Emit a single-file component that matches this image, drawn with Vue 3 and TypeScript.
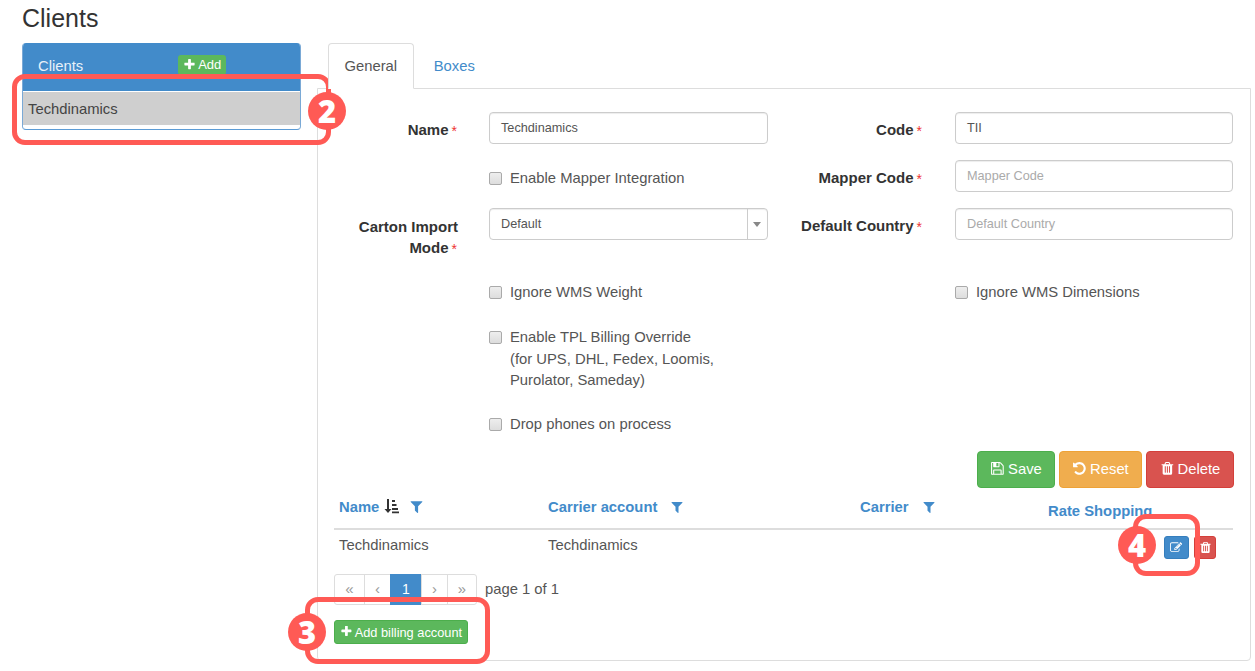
<script setup lang="ts">
const trash = 'M704 1376v-704q0-14-9-23t-23-9h-64q-14 0-23 9t-9 23v704q0 14 9 23t23 9h64q14 0 23-9t9-23zm256 0v-704q0-14-9-23t-23-9h-64q-14 0-23 9t-9 23v704q0 14 9 23t23 9h64q14 0 23-9t9-23zm256 0v-704q0-14-9-23t-23-9h-64q-14 0-23 9t-9 23v704q0 14 9 23t23 9h64q14 0 23-9t9-23zm-544-992h448l-48-117q-7-9-17-11h-317q-10 2-17 11zm928 32v64q0 14-9 23t-23 9h-96v948q0 83-47 143.500t-113 60.500h-832q-66 0-113-58.500t-47-141.500v-952h-96q-14 0-23-9t-9-23v-64q0-14 9-23t23-9h309l70-167q15-37 54-63t79-26h320q40 0 79 26t54 63l70 167h309q14 0 23 9t9 23z'
const plus = 'M1600 736v192q0 40-28 68t-68 28h-416v416q0 40-28 68t-68 28h-192q-40 0-68-28t-28-68v-416h-416q-40 0-68-28t-28-68v-192q0-40 28-68t68-28h416v-416q0-40 28-68t68-28h192q40 0 68 28t28 68v416h416q40 0 68 28t28 68z'
const filter = 'M1595 295q17 41-14 70l-493 493v742q0 42-39 59-13 5-25 5-27 0-45-19l-256-256q-19-19-19-45v-486l-493-493q-31-29-14-70 17-39 59-39h1280q42 0 59 39z'
const save = 'M512 1536h768v-384h-768v384zm896 0h128v-896q0-14-10-38.500t-20-34.500l-281-281q-10-10-34-20t-39-10v416q0 40-28 68t-68 28h-576q-40 0-68-28t-28-68v-416h-128v1280h128v-416q0-40 28-68t68-28h832q40 0 68 28t28 68v416zm-384-928v-320q0-13-9.500-22.500t-22.500-9.500h-192q-13 0-22.500 9.500t-9.500 22.500v320q0 13 9.500 22.500t22.500 9.500h192q13 0 22.500-9.500t9.500-22.500zm640 32v928q0 40-28 68t-68 28h-1344q-40 0-68-28t-28-68v-1344q0-40 28-68t68-28h928q40 0 88 20t76 48l280 280q28 28 48 76t20 88z'
const undo = 'M1664 896q0 156-61 298t-164 245-245 164-298 61q-172 0-327-72.500t-264-204.500q-7-10-6.500-22.500t8.500-20.500l137-138q10-9 25-9 16 2 23 12 73 95 179 147t225 52q104 0 198.500-40.500t163.500-109.500 109.500-163.500 40.500-198.500-40.500-198.500-109.500-163.500-163.500-109.500-198.500-40.500q-98 0-188 35.500t-160 101.500l137 138q31 30 14 69-17 40-59 40h-448q-26 0-45-19t-19-45v-448q0-42 40-59 39-17 69 14l130 129q107-101 244.500-156.500t284.500-55.500q156 0 298 61t245 164 164 245 61 298z'
const edit = 'M888 1184l116-116-152-152-116 116v56h96v96h56zm440-720q-16-16-33 1l-350 350q-17 17-1 33t33-1l350-350q17-17 1-33zm80 594v190q0 119-84.500 203.500t-203.500 84.500h-832q-119 0-203.500-84.500t-84.500-203.500v-832q0-119 84.500-203.500t203.500-84.500h832q63 0 117 25 15 7 18 23 3 17-9 29l-49 49q-14 14-32 8-23-6-45-6h-832q-66 0-113 47t-47 113v832q0 66 47 113t113 47h832q66 0 113-47t47-113v-126q0-13 9-22l64-64q15-15 35-7t20 29zm-96-738l288 288-672 672h-288v-288zm444 132l-92 92-288-288 92-92q28-28 68-28t68 28l152 152q28 28 28 68t-28 68z'
</script>

<template>
  <div class="page">
    <h1 class="title">Clients</h1>
    <div class="layout">
      <aside class="side">
        <div class="side-head">
          <span>Clients</span>
          <button class="btn-add"><svg class="ic" viewBox="0 0 1792 1792"><path :d="plus" /></svg>Add</button>
        </div>
        <div class="side-item">Techdinamics</div>
      </aside>

      <main class="main">
        <div class="tabs">
          <a class="tab active">General</a>
          <a class="tab boxes">Boxes</a>
        </div>
        <div class="body">
          <form class="form" @submit.prevent>
            <label class="lab">Name<i>*</i></label>
            <div class="input val">Techdinamics</div>
            <label class="lab right">Code<i>*</i></label>
            <div class="input val">TII</div>

            <span></span>
            <div class="check low-check"><span class="box"></span>Enable Mapper Integration</div>
            <label class="lab right">Mapper Code<i>*</i></label>
            <div class="input ph">Mapper Code</div>

            <label class="lab two"><span>Carton Import</span><br /><span>Mode<i>*</i></span></label>
            <div class="input val select">Default<span class="caret"><b></b></span></div>
            <label class="lab right">Default Country<i>*</i></label>
            <div class="input ph">Default Country</div>

            <span></span>
            <div class="check"><span class="box"></span>Ignore WMS Weight</div>
            <span></span>
            <div class="check"><span class="box"></span>Ignore WMS Dimensions</div>

            <span></span>
            <div class="check multi"><span class="box"></span><span>Enable TPL Billing Override<br />(for UPS, DHL, Fedex, Loomis,<br />Purolator, Sameday)</span></div>
            <span></span><span></span>

            <span></span>
            <div class="check"><span class="box"></span>Drop phones on process</div>
            <span></span><span></span>
          </form>

          <div class="actions">
            <button class="btn green"><svg class="ic" viewBox="0 0 1792 1792"><path :d="save" /></svg>Save</button>
            <button class="btn orange"><svg class="ic" viewBox="0 0 1792 1792"><path :d="undo" /></svg>Reset</button>
            <button class="btn red"><svg class="ic" viewBox="0 0 1792 1792"><path :d="trash" /></svg>Delete</button>
          </div>

          <div class="table">
            <div class="thead">
              <div class="th">Name
                <svg class="sort" viewBox="0 0 16 16"><path d="M4 1h2v10h2.500L5 15 1.500 11H4z" /><path d="M9 2h3v2H9zM9 6h4.500v2H9zM9 10h6v2H9zM9 13.500h7v1.800H9z" /></svg>
                <svg class="fil first" viewBox="0 0 1792 1792"><path :d="filter" /></svg>
              </div>
              <div class="th">Carrier account <svg class="fil" viewBox="0 0 1792 1792"><path :d="filter" /></svg></div>
              <div class="th">Carrier <svg class="fil" viewBox="0 0 1792 1792"><path :d="filter" /></svg></div>
              <div class="th low">Rate Shopping</div>
            </div>
            <div class="trow">
              <div>Techdinamics</div>
              <div>Techdinamics</div>
              <div></div>
              <div class="row-acts">
                <button class="mini blue"><svg class="ic" viewBox="0 0 1920 1792"><path :d="edit" /></svg></button>
                <button class="mini darkred"><svg class="ic" viewBox="0 0 1792 1792"><path :d="trash" /></svg></button>
              </div>
            </div>
          </div>

          <div class="pager-row">
            <div class="pager">
              <a>«</a><a>‹</a><a class="cur">1</a><a>›</a><a>»</a>
            </div>
            <span class="page-text">page 1 of 1</span>
          </div>

          <button class="btn-billing"><svg class="ic" viewBox="0 0 1792 1792"><path :d="plus" /></svg>Add billing account</button>
        </div>
      </main>
    </div>

    <div class="mark mark-2"></div>
    <div class="num num-2">2</div>
    <div class="mark mark-3"></div>
    <div class="num num-3">3</div>
    <div class="mark mark-4"></div>
    <div class="num num-4">4</div>
  </div>
</template>

<style>
html, body { margin: 0; background: #fff; overflow: hidden; }
</style>

<style scoped>
.page {
  position: relative;
  width: 1255px;
  height: 671px;
  overflow: hidden;
  box-sizing: border-box;
  padding: 0 0 0 22px;
  font-family: "Liberation Sans", Arial, sans-serif;
  font-size: 14.8px;
  color: #555;
}
.title {
  margin: 0;
  height: 43px;
  font-size: 25px;
  font-weight: 400;
  line-height: 37px;
  color: #333;
}
.layout { display: flex; gap: 16px; align-items: flex-start; }
.ic { width: 1em; height: 1em; fill: currentColor; vertical-align: -0.12em; margin-right: 3px; }

.side {
  width: 279px;
  flex: none;
  box-sizing: border-box;
  height: 87px;
  border: 1px solid #7aa9d6;
  border-top: 0;
  border-bottom-color: #5b9bd5;
  border-radius: 4px;
  overflow: hidden;
}
.side-head {
  height: 48px;
  margin: 0 -1px;
  background: #428bca;
  color: #e8f1f9;
  box-sizing: border-box;
  padding: 12px 0 0 16px;
  display: flex;
  align-items: flex-start;
  line-height: 22px;
}
.btn-add {
  margin-left: 95px;
  border: 0;
  background: #5cb85c;
  color: #fff;
  font: inherit;
  font-size: 13px;
  line-height: 20px;
  height: 20px;
  width: 48px;
  padding: 0;
  border-radius: 3px;
  text-align: center;
}
.btn-add .ic { margin-right: 2px; }
.side-item {
  height: 33px;
  line-height: 35px;
  margin-top: 1px;
  border-bottom: 2px solid #fff;
  background: #cfcfcf;
  color: #444;
  padding-left: 5px;
}

.main { width: 934px; flex: none; }
.tabs { height: 45px; padding-left: 10.500px; display: flex; }
.tab {
  box-sizing: border-box;
  height: 46px;
  padding: 0 16px;
  line-height: 44px;
  color: #428bca;
  border: 1px solid transparent;
  border-radius: 4px 4px 0 0;
}
.tab.boxes { margin-left: 2.500px; }
.tab.active {
  color: #555;
  background: #fff;
  border-color: #ddd #ddd #fff;
  position: relative;
  z-index: 1;
}
.body {
  box-sizing: border-box;
  height: 573px;
  border: 1px solid #ddd;
  border-radius: 0 0 4px 4px;
  padding: 23px 17px 0 16px;
}
.form {
  display: grid;
  grid-template-columns: 155px 279px 187px 278px;
  grid-template-rows: 31px 31px 59px 18px 79px 20px;
  row-gap: 17px;
}
.lab {
  display: block;
  text-align: right;
  font-weight: 700;
  font-size: 15px;
  color: #333;
  padding: 7px 31px 0 0;
  line-height: 21px;
}
.lab.right { padding-right: 32px; }
.lab i { color: #e33; font-style: normal; font-weight: 400; margin: 0 1px 0 3px; font-size: 14px; vertical-align: -1px; line-height: 1; }
.lab.two { padding-top: 7.500px; }
.input {
  box-sizing: border-box;
  height: 32px;
  border: 1px solid #ccc;
  border-radius: 4px;
  padding: 0 11px;
  font-size: 12.7px;
  line-height: 30px;
  box-shadow: inset 0 1px 1px rgba(0,0,0,.075);
  position: relative;
}
.val { color: #555; }
.ph { color: #aaa; }
.caret {
  position: absolute;
  right: 0; top: 0; bottom: 0;
  width: 19px;
  border-left: 1px solid #ccc;
}
.caret b {
  position: absolute;
  left: 5px; top: 13px;
  border: 4px solid transparent;
  border-top: 5px solid #888;
  border-bottom: 0;
}
.check { display: flex; align-items: flex-start; line-height: 21.500px; align-self: center; }
.low-check { align-self: start; margin-top: 8px; }
.box {
  flex: none;
  width: 11px;
  height: 11px;
  margin: 4px 8px 0 0;
  border: 1px solid #aaa;
  border-radius: 2px;
  background: linear-gradient(#eee, #ddd);
}
.multi { align-self: start; margin-top: 8px; }
.actions {
  display: flex;
  justify-content: flex-end;
  gap: 4px;
  margin-top: 16px;
  margin-right: -1px;
}
.btn {
  box-sizing: border-box;
  height: 37px;
  border: 1px solid transparent;
  border-radius: 4px;
  font: inherit;
  color: #fff;
  padding: 0;
}
.green { background: #5cb85c; border-color: #4cae4c; width: 78px; }
.orange { background: #f0ad4e; border-color: #eea236; width: 83px; }
.red { background: #d9534f; border-color: #d43f3a; width: 88px; }

.thead {
  display: grid;
  grid-template-columns: 209px 312px 188px 1fr;
  height: 40px;
  border-bottom: 2px solid #ddd;
  color: #428bca;
  font-weight: 700;
  padding-left: 5px;
}
.th { padding-top: 9px; line-height: 21px; }
.th.low { padding-top: 13px; }
.sort { width: 16px; height: 16px; fill: #333; vertical-align: -2px; }
.fil { width: 14px; height: 14px; fill: #428bca; vertical-align: -2px; margin-left: 9px; }
.fil.first { width: 15px; height: 15px; margin-left: 10px; }
.trow {
  display: grid;
  grid-template-columns: 209px 312px 188px 1fr;
  height: 44px;
  padding-left: 5px;
  line-height: 31px;
}
.row-acts { display: flex; justify-content: flex-end; gap: 5px; padding: 6px 17px 0 0; align-items: flex-start; }
.mini {
  box-sizing: border-box;
  height: 23px;
  border: 1px solid transparent;
  border-radius: 3px;
  color: #fff;
  padding: 0;
  font-size: 13px;
  line-height: 19px;
}
.mini .ic { margin-right: 0; }
.blue { width: 25px; background: #428bca; border-color: #357ebd; }
.darkred { width: 22px; background: #d9534f; border-color: #d43f3a; }

.pager-row { display: flex; align-items: center; gap: 8px; height: 31px; }
.page-text { margin-top: -2px; }
.pager { display: flex; height: 31px; }
.pager a {
  box-sizing: border-box;
  width: 27px;
  height: 31px;
  border: 1px solid #ddd;
  margin-left: -1px;
  text-align: center;
  line-height: 28px;
  color: #999;
  font-size: 15px;
}
.pager a:first-child { width: 31px; margin-left: 0; border-radius: 3px 0 0 3px; }
.pager a:last-child { width: 30px; border-radius: 0 3px 3px 0; }
.pager a.cur { background: #428bca; border-color: #428bca; color: #fff; width: 32px; font-size: 14px; }
.btn-billing {
  display: block;
  margin-top: 15px;
  width: 134px;
  height: 24px;
  border: 1px solid #4cae4c;
  border-radius: 3px;
  background: #5cb85c;
  color: #fff;
  font: inherit;
  font-size: 12.8px;
  padding: 0;
}
.btn-billing .ic { margin-right: 2px; }

.mark {
  position: absolute;
  box-sizing: border-box;
  border: 5px solid #ff5a55;
  border-radius: 13px;
  pointer-events: none;
}
.mark-2 { left: 12px; top: 74px; width: 319px; height: 71px; }
.mark-3 { left: 305px; top: 597px; width: 185px; height: 67px; }
.mark-4 { left: 1133px; top: 514px; width: 67px; height: 62px; }
.num {
  position: absolute;
  width: 38px;
  height: 38px;
  border-radius: 50%;
  background: #ff5a55;
  color: #fff;
  font-family: "Open Sans", sans-serif;
  font-weight: 800;
  font-size: 31px;
  line-height: 38px;
  text-align: center;
}
.num-2 { left: 308px; top: 92px; }
.num-3 { left: 288px; top: 613px; }
.num-4 { left: 1118px; top: 526px; }
</style>
